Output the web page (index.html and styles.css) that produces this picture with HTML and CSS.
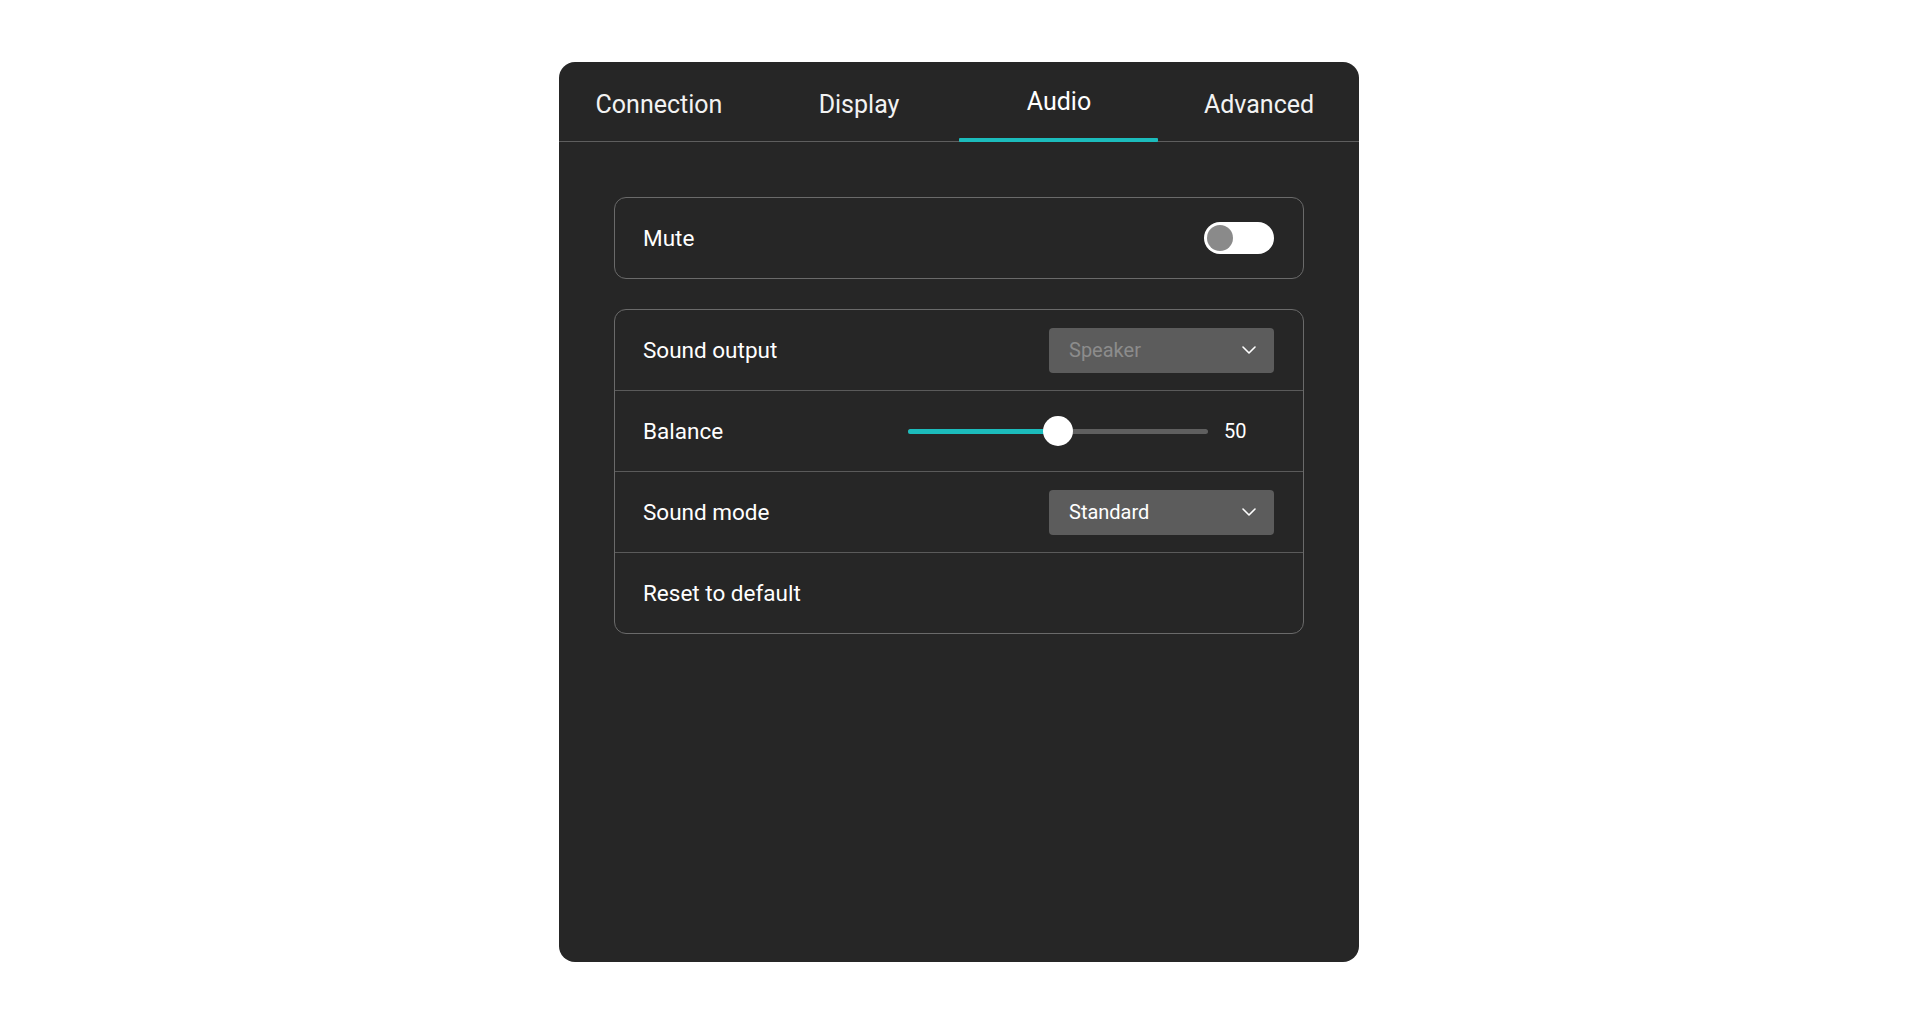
FILE: index.html
```html
<!DOCTYPE html>
<html lang="en">
<head>
<meta charset="utf-8">
<title>Settings - Audio</title>
<link rel="stylesheet" href="styles.css">
</head>
<body>
<div class="panel">
  <nav class="tabs">
    <div class="tab">Connection</div>
    <div class="tab">Display</div>
    <div class="tab active">Audio</div>
    <div class="tab">Advanced</div>
  </nav>
  <div class="content">
    <section class="card">
      <div class="row">
        <span class="label">Mute</span>
        <span class="toggle"><span class="knob"></span></span>
      </div>
    </section>
    <section class="card">
      <div class="row">
        <span class="label">Sound output</span>
        <div class="select disabled">
          <span>Speaker</span>
          <svg class="chev" width="14" height="8" viewBox="0 0 14 8"><path d="M1 1 L7 7 L13 1" fill="none" stroke="#ffffff" stroke-width="1.6" stroke-linecap="round" stroke-linejoin="round"/></svg>
        </div>
      </div>
      <div class="row">
        <span class="label">Balance</span>
        <div class="slider">
          <div class="track"><div class="fill" style="width:50%"></div><div class="thumb" style="left:50%"></div></div>
        </div>
        <span class="value">50</span>
      </div>
      <div class="row">
        <span class="label">Sound mode</span>
        <div class="select">
          <span>Standard</span>
          <svg class="chev" width="14" height="8" viewBox="0 0 14 8"><path d="M1 1 L7 7 L13 1" fill="none" stroke="#ffffff" stroke-width="1.6" stroke-linecap="round" stroke-linejoin="round"/></svg>
        </div>
      </div>
      <div class="row">
        <span class="label">Reset to default</span>
      </div>
    </section>
  </div>
</div>
</body>
</html>
```
FILE: styles.css
```css
html, body {
  margin: 0;
  padding: 0;
  background: #ffffff;
}
body {
  padding-top: 62px;
  font-family: Roboto, "Noto Sans", "Liberation Sans", sans-serif;
  color: #ffffff;
}
.panel {
  width: 800px;
  height: 900px;
  margin: 0 auto;
  background: #262626;
  border-radius: 16px;
  overflow: hidden;
}
.tabs {
  display: flex;
  height: 79px;
  border-bottom: 1px solid #5e5e5e;
}
.tab {
  flex: 1;
  display: flex;
  align-items: center;
  justify-content: center;
  font-size: 25px;
  color: #f2f2f2;
  padding-top: 5px;
  box-sizing: border-box;
  position: relative;
}
.tab.active {
  padding-top: 0;
  color: #ffffff;
}
.tab.active::after {
  content: "";
  position: absolute;
  left: 0;
  right: 1px;
  bottom: -1px;
  height: 4px;
  background: #1cbcbc;
  border-radius: 1px;
}
.content {
  padding: 55px 55px 0;
  display: flex;
  flex-direction: column;
  gap: 30px;
}
.card {
  border: 1px solid #6a6a6a;
  border-radius: 12px;
}
.row {
  height: 80px;
  display: flex;
  align-items: center;
  padding: 0 29px 0 28px;
  border-top: 1px solid #5a5a5a;
}
.row:first-child {
  border-top: none;
}
.label {
  flex: 1;
  font-size: 22.5px;
  color: #ffffff;
}
.toggle {
  width: 70px;
  height: 32px;
  border-radius: 16px;
  background: #ffffff;
  position: relative;
}
.knob {
  position: absolute;
  left: 3px;
  top: 3px;
  width: 26px;
  height: 26px;
  border-radius: 50%;
  background: #8a8a8a;
}
.select {
  width: 225px;
  height: 45px;
  box-sizing: border-box;
  border-radius: 4px;
  background: #5c5c5c;
  display: flex;
  align-items: center;
  justify-content: space-between;
  padding: 0 18px 0 20px;
  font-size: 20px;
  color: #ffffff;
}
.select.disabled span {
  color: #8c8c8c;
}
.slider {
  width: 300px;
  display: flex;
  align-items: center;
}
.track {
  position: relative;
  width: 100%;
  height: 5px;
  border-radius: 3px;
  background: #5f5f5f;
}
.fill {
  height: 100%;
  border-radius: 3px;
  background: #1cbcbc;
}
.thumb {
  position: absolute;
  top: 50%;
  width: 30px;
  height: 30px;
  border-radius: 50%;
  background: #ffffff;
  transform: translate(-50%, -50%);
}
.value {
  width: 50px;
  margin-left: 16px;
  font-size: 20px;
  color: #ffffff;
}
```
